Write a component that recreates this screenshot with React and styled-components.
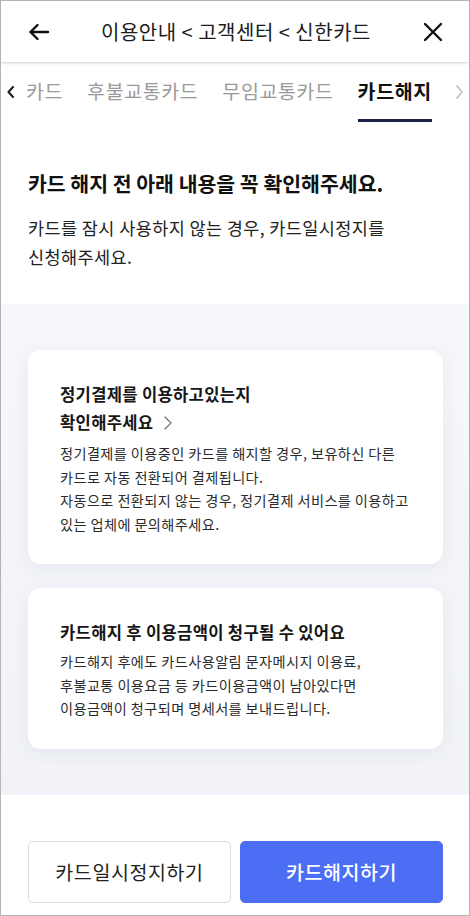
import React from 'react';
import styled, { createGlobalStyle } from 'styled-components';

const GlobalStyle = createGlobalStyle`
  html, body {
    margin: 0;
    padding: 0;
    background: #fff;
  }
  * { box-sizing: border-box; }
`;

const Frame = styled.div`
  width: 470px;
  height: 916px;
  border: 1px solid #b4b4b4;
  background: #fff;
  display: flex;
  flex-direction: column;
  overflow: hidden;
  font-family: "Noto Sans CJK KR", "Noto Sans", sans-serif;
  color: #111;
`;

const Header = styled.header`
  height: 61px;
  flex-shrink: 0;
  display: flex;
  align-items: center;
  justify-content: space-between;
  padding: 0 24px 0 26px;
  position: relative;
  z-index: 1;
  box-shadow: 0 1px 2px rgba(0, 0, 0, 0.12), 0 2px 5px rgba(0, 0, 0, 0.05);
`;

const HeaderTitle = styled.h1`
  margin: 0;
  font-size: 20px;
  font-weight: 400;
  color: #1b1b1b;
  letter-spacing: 0.5px;
`;

const IconButton = styled.span`
  width: 24px;
  height: 24px;
  display: flex;
  align-items: center;
  justify-content: center;
`;

const TabBar = styled.nav`
  height: 60px;
  flex-shrink: 0;
  display: flex;
  align-items: stretch;
  position: relative;
  overflow: hidden;
`;

const TabArrow = styled.span`
  position: absolute;
  top: 0;
  bottom: 0;
  ${p => (p.$side === 'left' ? 'left: 4px;' : 'right: 4px;')}
  display: flex;
  align-items: center;
`;

const TabList = styled.div`
  display: flex;
  gap: 24px;
  padding-left: 25px;
  white-space: nowrap;
`;

const Tab = styled.div`
  position: relative;
  display: flex;
  align-items: center;
  font-size: 19.5px;
  letter-spacing: 0.6px;
  font-weight: ${p => (p.$active ? 700 : 400)};
  color: ${p => (p.$active ? '#111' : '#9a9a9a')};
  padding-bottom: 3px;

  &::after {
    content: '';
    display: ${p => (p.$active ? 'block' : 'none')};
    position: absolute;
    left: 0;
    right: 0;
    bottom: 0;
    height: 3.5px;
    background: #1c2147;
  }
`;

const Intro = styled.section`
  padding: 46px 26px 33px 27px;
`;

const IntroTitle = styled.h2`
  margin: 0;
  font-size: 20.5px;
  line-height: 30px;
  font-weight: 700;
`;

const IntroText = styled.p`
  margin: 15px 0 0;
  font-size: 17.5px;
  letter-spacing: 0.4px;
  line-height: 29px;
  color: #222;
`;

const InfoArea = styled.section`
  background: linear-gradient(180deg, #f6f7fb 0%, #f1f3f8 100%);
  padding: 46px 26px 46px 27px;
  display: flex;
  flex-direction: column;
  gap: 24px;
`;

const Card = styled.div`
  background: #fff;
  border-radius: 13px;
  padding: 30px 32px 28px 32px;
  box-shadow: 0 4px 18px rgba(40, 50, 80, 0.07);
`;

const CardTitle = styled.h3`
  margin: 0;
  font-size: 16.6px;
  line-height: 28px;
  font-weight: 700;
  color: #161616;
  letter-spacing: 0.3px;
`;

const Chevron = styled.span`
  display: inline-block;
  margin-left: 10px;
  vertical-align: -2px;
`;

const CardText = styled.p`
  margin: 4px 0 0;
  font-size: 14.2px;
  line-height: 23.5px;
  color: #2b2b2b;
  letter-spacing: 0.4px;
`;

const Footer = styled.footer`
  padding: 46px 26px 0 27px;
  display: flex;
  gap: 9px;
`;

const Button = styled.button`
  flex: 1;
  height: 62px;
  border-radius: 5px;
  font-family: inherit;
  font-size: 19.5px;
  letter-spacing: 0.6px;
  font-weight: ${p => (p.$primary ? 500 : 400)};
  border: 1px solid ${p => (p.$primary ? '#4c6ef5' : '#dcdcdc')};
  background: ${p => (p.$primary ? '#4c6ef5' : '#fff')};
  color: ${p => (p.$primary ? '#fff' : '#222')};
`;

const tabs = ['카드', '후불교통카드', '무임교통카드', '카드해지'];

export default function App() {
  return (
    <Frame>
      <GlobalStyle />
      <Header>
        <IconButton>
          <svg width="22" height="18" viewBox="0 0 22 18" fill="none" stroke="#111" strokeWidth="2.4" strokeLinecap="round" strokeLinejoin="round">
            <path d="M20 9H2.5M9.5 2L2.5 9l7 7" />
          </svg>
        </IconButton>
        <HeaderTitle>이용안내 &lt; 고객센터 &lt; 신한카드</HeaderTitle>
        <IconButton>
          <svg width="20" height="20" viewBox="0 0 20 20" fill="none" stroke="#111" strokeWidth="2.4" strokeLinecap="round">
            <path d="M2 2l16 16M18 2L2 18" />
          </svg>
        </IconButton>
      </Header>

      <TabBar>
        <TabArrow $side="left">
          <svg width="12" height="16" viewBox="0 0 12 16" fill="none" stroke="#222" strokeWidth="2.2" strokeLinecap="round" strokeLinejoin="round">
            <path d="M8 3L3.5 8 8 13" />
          </svg>
        </TabArrow>
        <TabList>
          {tabs.map((t, i) => (
            <Tab key={t} $active={i === tabs.length - 1}>{t}</Tab>
          ))}
        </TabList>
        <TabArrow $side="right">
          <svg width="12" height="18" viewBox="0 0 12 18" fill="none" stroke="#c4c4c4" strokeWidth="1.8" strokeLinecap="round" strokeLinejoin="round">
            <path d="M4 3l5 6-5 6" />
          </svg>
        </TabArrow>
      </TabBar>

      <Intro>
        <IntroTitle>카드 해지 전 아래 내용을 꼭 확인해주세요.</IntroTitle>
        <IntroText>
          카드를 잠시 사용하지 않는 경우, 카드일시정지를
          <br />
          신청해주세요.
        </IntroText>
      </Intro>

      <InfoArea>
        <Card>
          <CardTitle>
            정기결제를 이용하고있는지
            <br />
            확인해주세요
            <Chevron>
              <svg width="10" height="16" viewBox="0 0 10 16" fill="none" stroke="#777" strokeWidth="1.3" strokeLinecap="round" strokeLinejoin="round">
                <path d="M2 2l6 6-6 6" />
              </svg>
            </Chevron>
          </CardTitle>
          <CardText>
            정기결제를 이용중인 카드를 해지할 경우, 보유하신 다른
            <br />
            카드로 자동 전환되어 결제됩니다.
            <br />
            자동으로 전환되지 않는 경우, 정기결제 서비스를 이용하고
            <br />
            있는 업체에 문의해주세요.
          </CardText>
        </Card>
        <Card>
          <CardTitle>카드해지 후 이용금액이 청구될 수 있어요</CardTitle>
          <CardText>
            카드해지 후에도 카드사용알림 문자메시지 이용료,
            <br />
            후불교통 이용요금 등 카드이용금액이 남아있다면
            <br />
            이용금액이 청구되며 명세서를 보내드립니다.
          </CardText>
        </Card>
      </InfoArea>

      <Footer>
        <Button>카드일시정지하기</Button>
        <Button $primary>카드해지하기</Button>
      </Footer>
    </Frame>
  );
}
